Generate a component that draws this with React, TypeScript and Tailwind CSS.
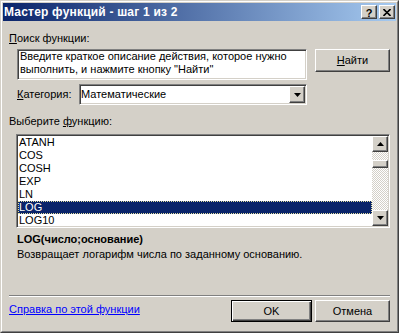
import React from 'react';

const FUNCS = ['ATANH', 'COS', 'COSH', 'EXP', 'LN', 'LOG', 'LOG10'];

const raised =
  'border border-solid border-t-white border-l-white border-r-[#404040] border-b-[#404040] shadow-[inset_-1px_-1px_#808080] bg-[#d4d0c8]';
const sunken =
  'border border-solid border-t-[#808080] border-l-[#808080] border-r-white border-b-white shadow-[inset_1px_1px_#404040,inset_-1px_-1px_#d4d0c8] bg-white';

const Arrow: React.FC<{ down?: boolean }> = ({ down }) => (
  <svg width="7" height="4" viewBox="0 0 7 4" className="block">
    {down ? <path d="M0 0h7L3.5 4z" fill="#000" /> : <path d="M0 4h7L3.5 0z" fill="#000" />}
  </svg>
);

const App: React.FC = () => {
  return (
    <div
      className="w-[399px] h-[333px] bg-[#d4d0c8] border border-solid border-t-[#d4d0c8] border-l-[#d4d0c8] border-r-[#404040] border-b-[#404040] text-[11px] leading-[13px] text-black select-none"
      style={{ fontFamily: '"Liberation Sans", Arial, sans-serif' }}
    >
      <div className="h-full border border-solid border-t-white border-l-white border-r-[#808080] border-b-[#808080] p-[1px] flex flex-col">
        {/* Title bar */}
        <div className="h-[18px] flex items-center bg-[linear-gradient(to_right,#0a246a,#a6caf0)] pl-[1px] pr-[1px]">
          <span className="flex-1 text-white font-bold text-[12px] leading-[18px] tracking-[0.2px]">
            Мастер функций - шаг 1 из 2
          </span>
          <div className="flex gap-[2px]">
            <div className={`w-[16px] h-[14px] flex items-center justify-center ${raised}`}>
              <span className="font-bold text-[11px] leading-[10px] mt-[1px]">?</span>
            </div>
            <div className={`w-[16px] h-[14px] flex items-center justify-center ${raised}`}>
              <svg width="8" height="7" viewBox="0 0 8 7" className="block">
                <path d="M0.5 0l3.5 3.5L7.5 0M0.5 7l3.5-3.5L7.5 7" stroke="#000" strokeWidth="1.6" fill="none" />
              </svg>
            </div>
          </div>
        </div>

        {/* Content */}
        <div className="flex-1 flex flex-col px-[6px]">
          <div className="mt-[11px]">
            <u className="underline-offset-1">П</u>оиск функции:
          </div>

          <div className="mt-[4px] flex pl-[8px] gap-[8px]">
            <div className={`w-[290px] h-[31px] px-[2px] pt-0 ${sunken}`}>
              Введите краткое описание действия, которое нужно выполнить, и нажмите кнопку "Найти"
            </div>
            <div className={`w-[75px] h-[23px] flex items-center justify-center ${raised}`}>
              <span>
                <u className="underline-offset-1">Н</u>айти
              </span>
            </div>
          </div>

          <div className="mt-[4px] flex items-center pl-[8px]">
            <span className="w-[62px]">
              <u className="underline-offset-1">К</u>атегория:
            </span>
            <div className={`w-[228px] h-[21px] flex items-center pl-[1px] pr-[1px] ${sunken}`}>
              <span className="flex-1">Математические</span>
              <div className={`w-[16px] h-[17px] flex items-center justify-center ${raised}`}>
                <Arrow down />
              </div>
            </div>
          </div>

          <div className="mt-[10px]">
            Выберите <u className="underline-offset-1">ф</u>ункцию:
          </div>

          <div className={`mt-[6px] ml-[7px] w-[374px] h-[94px] flex p-[1px] ${sunken}`}>
            <div className="flex-1 flex flex-col">
              {FUNCS.map((f) => (
                <div
                  key={f}
                  className={`h-[13px] leading-[13px] pl-[1px] ${
                    f === 'LOG'
                      ? 'bg-[#0a246a] text-white outline-1 outline-dotted outline-[#e4e0a0] -outline-offset-1'
                      : ''
                  }`}
                >
                  {f}
                </div>
              ))}
            </div>
            <div className="w-[16px] flex flex-col bg-[repeating-conic-gradient(#ffffff_0_25%,#d4d0c8_0_50%)] bg-[length:2px_2px]">
              <div className={`h-[16px] flex items-center justify-center ${raised}`}>
                <Arrow />
              </div>
              <div className={`h-[8px] mt-[8px] ${raised}`} />
              <div className="flex-1" />
              <div className={`h-[16px] flex items-center justify-center ${raised}`}>
                <Arrow down />
              </div>
            </div>
          </div>

          <div className="mt-[5px] pl-[8px] font-bold">LOG(число;основание)</div>
          <div className="mt-[2px] pl-[8px]">Возвращает логарифм числа по заданному основанию.</div>

          <div className="mt-[34px] h-[2px] border-t border-solid border-t-[#808080] border-b border-b-white" />

          <div className="mt-[3px] flex items-start">
            <a className="flex-1 mt-[3px] text-[#0000ff] underline underline-offset-1 cursor-pointer">
              Справка по этой функции
            </a>
            <div className="w-[81px] h-[22px] border border-solid border-black shadow-[inset_1px_1px_#ffffff,inset_-1px_-1px_#404040,inset_-2px_-2px_#808080] flex items-center justify-center">
              OK
            </div>
            <div className={`ml-[3px] w-[75px] h-[22px] flex items-center justify-center ${raised}`}>
              Отмена
            </div>
          </div>
        </div>
      </div>
    </div>
  );
};

export default App;
